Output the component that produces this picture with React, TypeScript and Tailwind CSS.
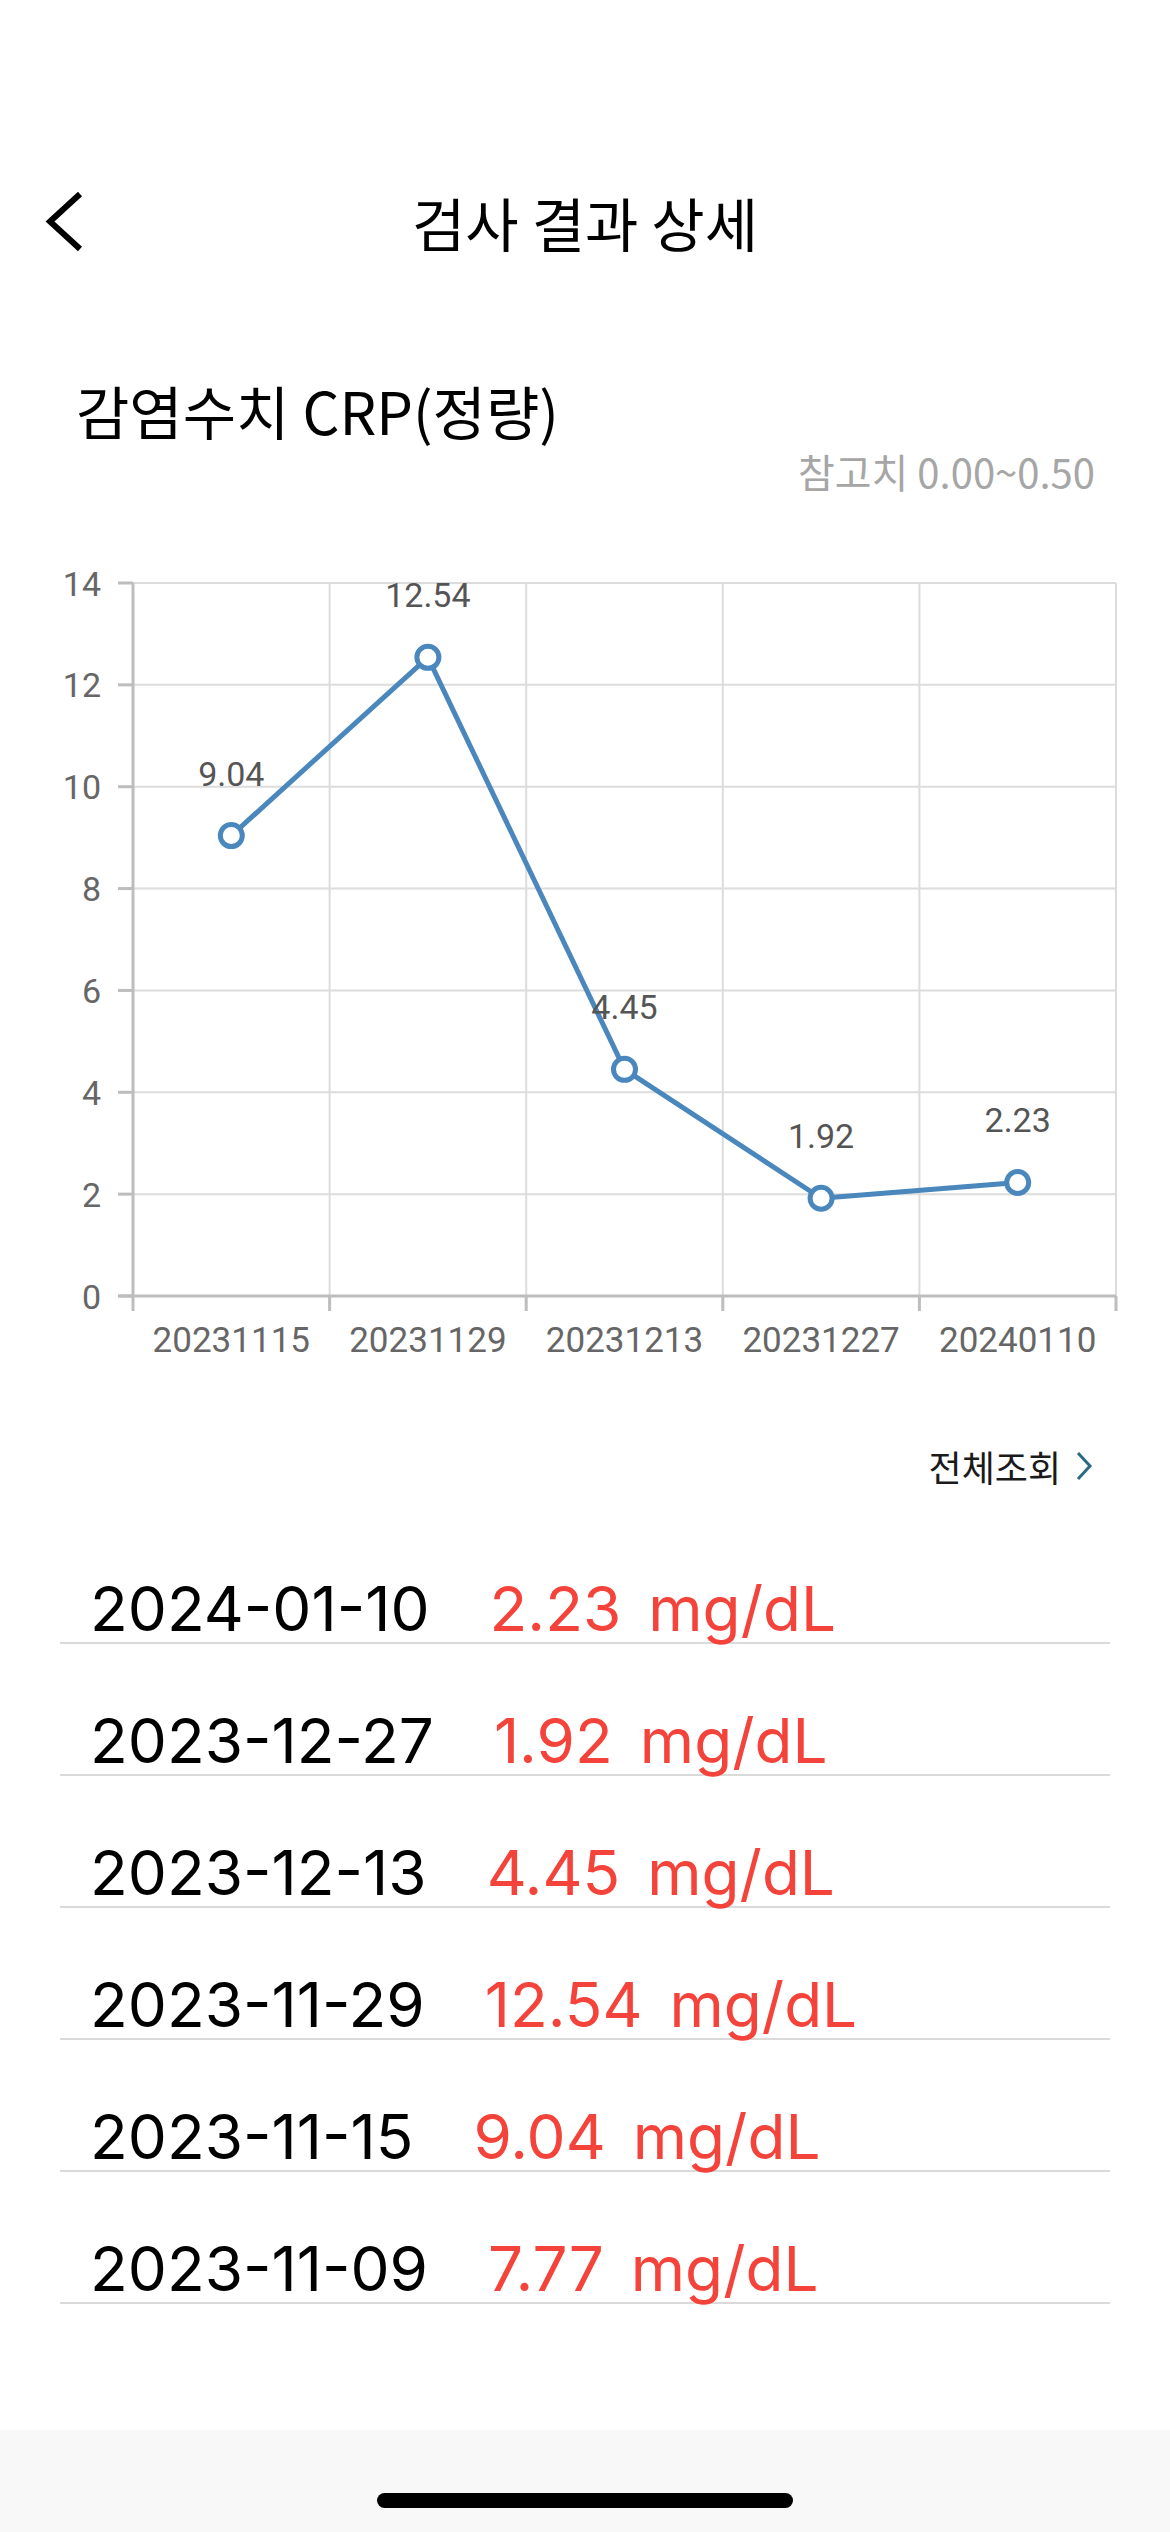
import React from "react";

const results = [
  { date: "20231115", value: 9.04 },
  { date: "20231129", value: 12.54 },
  { date: "20231213", value: 4.45 },
  { date: "20231227", value: 1.92 },
  { date: "20240110", value: 2.23 },
];

const history = [
  { date: "2024-01-10", value: "2.23" },
  { date: "2023-12-27", value: "1.92" },
  { date: "2023-12-13", value: "4.45" },
  { date: "2023-11-29", value: "12.54" },
  { date: "2023-11-15", value: "9.04" },
  { date: "2023-11-09", value: "7.77" },
];

// chart geometry, in page pixels
const X0 = 133;
const X1 = 1116;
const Y_TOP = 584;
const Y_BOTTOM = 1297;
const COL = (X1 - X0) / 5;
const UNIT = (Y_BOTTOM - Y_TOP) / 14;

function TrendChart() {
  const pts = results.map((r, i) => ({
    ...r,
    x: X0 + COL * (i + 0.5),
    y: Y_BOTTOM - r.value * UNIT,
  }));
  const ticks = [0, 2, 4, 6, 8, 10, 12, 14];

  return (
    <svg width={1170} height={880} viewBox="0 500 1170 880" className="block mt-[3px]">
      {/* grid */}
      {ticks.slice(1).map((t) => (
        <line key={"h" + t} x1={X0} x2={X1} y1={Y_BOTTOM - t * UNIT} y2={Y_BOTTOM - t * UNIT} stroke="#dcdcdc" strokeWidth={2} />
      ))}
      {[1, 2, 3, 4, 5].map((i) => (
        <line key={"v" + i} x1={X0 + COL * i} x2={X0 + COL * i} y1={Y_TOP} y2={Y_BOTTOM} stroke="#dcdcdc" strokeWidth={2} />
      ))}

      {/* axes */}
      <line x1={X0} x2={X0} y1={Y_TOP} y2={Y_BOTTOM} stroke="#bdbdbd" strokeWidth={3} />
      <line x1={118} x2={X1} y1={Y_BOTTOM} y2={Y_BOTTOM} stroke="#bdbdbd" strokeWidth={3} />
      {ticks.map((t) => (
        <line key={"yt" + t} x1={118} x2={X0} y1={Y_BOTTOM - t * UNIT} y2={Y_BOTTOM - t * UNIT} stroke="#bdbdbd" strokeWidth={3} />
      ))}
      {[0, 1, 2, 3, 4, 5].map((i) => (
        <line key={"xt" + i} x1={X0 + COL * i} x2={X0 + COL * i} y1={Y_BOTTOM} y2={1312} stroke="#bdbdbd" strokeWidth={3} />
      ))}

      {/* labels */}
      {ticks.map((t) => (
        <text key={"yl" + t} x={101} y={Y_BOTTOM - t * UNIT + 12.5} textAnchor="end" fontFamily="Roboto, sans-serif" fontSize={34} fill="#666666">
          {t}
        </text>
      ))}
      {pts.map((p) => (
        <text key={"xl" + p.date} x={p.x} y={1353} textAnchor="middle" fontFamily="Roboto, sans-serif" fontSize={35} fill="#666666">
          {p.date}
        </text>
      ))}

      {/* series */}
      <polyline points={pts.map((p) => `${p.x},${p.y}`).join(" ")} fill="none" stroke="#4a87bc" strokeWidth={5} strokeLinejoin="round" />
      {pts.map((p) => (
        <circle key={"c" + p.date} cx={p.x} cy={p.y} r={11} fill="#ffffff" stroke="#4a87bc" strokeWidth={5} />
      ))}
      {pts.map((p) => (
        <text key={"dl" + p.date} x={p.x} y={p.y - 50} textAnchor="middle" fontFamily="Roboto, sans-serif" fontSize={34} fill="#555555">
          {p.value.toFixed(2)}
        </text>
      ))}
    </svg>
  );
}

export default function App() {
  return (
    <div className="w-[1170px] h-[2532px] bg-white flex flex-col overflow-hidden font-['Noto_Sans_CJK_KR',sans-serif]">
      {/* status bar area */}
      <div className="h-[166px]" />

      {/* header */}
      <div className="h-[112px] grid grid-cols-[1fr_auto_1fr] items-center">
        <div className="pl-[44px] flex items-center">
          <svg width={40} height={62} viewBox="0 0 40 62">
            <polyline points="36,3 6,30.5 36,58" fill="none" stroke="#000000" strokeWidth={6} />
          </svg>
        </div>
        <h1 className="text-[58px] leading-[72px] text-black font-normal">검사 결과 상세</h1>
        <div />
      </div>

      {/* test name */}
      <div className="pt-[96px] pl-[76px] text-[58px] leading-[72px] text-black">감염수치 CRP(정량)</div>
      <div className="pr-[75px] text-right text-[40px] leading-[50px] text-[#a6a6a6]">참고치 0.00~0.50</div>

      <TrendChart />

      <div className="mt-[65px] pr-[77px] flex justify-end items-center gap-[14px] text-[36px] leading-[44px] text-[#1a1a1a]">
        <span>전체조회</span>
        <svg width={18} height={30} viewBox="0 0 18 30">
          <polyline points="3,2 15,15 3,28" fill="none" stroke="#2b6a85" strokeWidth={3} />
        </svg>
      </div>

      {/* history list */}
      <div className="mt-[24px] mx-[60px] flex flex-col">
        {history.map((h) => (
          <div key={h.date} className="h-[132px] flex items-end pb-[2px] pl-[30px] border-b-2 border-[#dadada] font-[Inter,sans-serif] text-[62px] leading-none">
            <span className="text-black">{h.date}</span>
            <span className="ml-[60px] text-[#f4433a]">{h.value}</span>
            <span className="ml-[27px] text-[#f4433a]">mg/dL</span>
          </div>
        ))}
      </div>

      <div className="flex-1" />

      {/* home indicator */}
      <div className="h-[102px] bg-[#f8f8f8] flex justify-center pt-[63px]">
        <div className="w-[416px] h-[15px] rounded-full bg-black" />
      </div>
    </div>
  );
}
